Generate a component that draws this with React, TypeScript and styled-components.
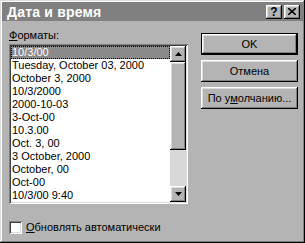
import React from "react"
import styled, { createGlobalStyle, css } from "styled-components"

const FACE = "#b4b4b4"

const GlobalStyle = createGlobalStyle`
  html, body {
    margin: 0;
    padding: 0;
    background: ${FACE};
  }
  body {
    font-family: "Liberation Sans", Arial, sans-serif;
    font-size: 11px;
    color: #000;
  }
`

const raised = css`
  box-shadow: inset -1px -1px #000, inset 1px 1px #fff, inset -2px -2px #808080,
    inset 2px 2px #dcdcdc;
`

const sunken = css`
  box-shadow: inset 1px 1px #808080, inset -1px -1px #fff, inset 2px 2px #404040,
    inset -2px -2px #dcdcdc;
`

const Window = styled.div`
  width: 305px;
  height: 243px;
  box-sizing: border-box;
  padding: 2px;
  background: ${FACE};
  box-shadow: inset -1px -1px #000, inset 1px 1px #dcdcdc, inset -2px -2px #808080,
    inset 2px 2px #fff;
  display: flex;
  flex-direction: column;
`

const TitleBar = styled.div`
  height: 19px;
  background: #808080;
  display: flex;
  align-items: center;
  padding: 0 3px 0 5px;
`

const TitleText = styled.div`
  flex: 1;
  color: #fff;
  font-weight: bold;
  font-size: 14px;
  letter-spacing: 0.2px;
`

const TitleButtons = styled.div`
  display: flex;
  gap: 2px;
`

const TitleButton = styled.div`
  width: 16px;
  height: 14px;
  box-sizing: border-box;
  background: ${FACE};
  ${raised};
  display: flex;
  align-items: center;
  justify-content: center;
  font-weight: bold;
  font-size: 12px;
  line-height: 14px;
`

const Body = styled.div`
  flex: 1;
  display: flex;
  padding: 8px 0 0 7px;
`

const LeftColumn = styled.div`
  width: 179px;
  display: flex;
  flex-direction: column;
`

const Label = styled.div`
  height: 13px;
  line-height: 13px;
  margin-bottom: 2px;
`

const Key = styled.span`
  text-decoration: underline;
`

const ListBox = styled.div`
  height: 160px;
  box-sizing: border-box;
  padding: 2px;
  background: #fff;
  ${sunken};
  display: flex;
`

const Rows = styled.div`
  flex: 1;
  display: flex;
  flex-direction: column;
`

const Row = styled.div<{ $selected?: boolean }>`
  height: 13px;
  line-height: 13px;
  padding-left: 1px;
  white-space: nowrap;
  overflow: hidden;
  ${({ $selected }) =>
    $selected &&
    css`
      background: #8a8a8a;
      color: #fff;
      outline: 1px dotted #000;
      outline-offset: -1px;
    `}
`

const ScrollBar = styled.div`
  width: 16px;
  display: flex;
  flex-direction: column;
  background: #d8d8d8;
`

const ScrollButton = styled.div`
  width: 16px;
  height: 16px;
  box-sizing: border-box;
  background: ${FACE};
  ${raised};
  display: flex;
  align-items: center;
  justify-content: center;
`

const Thumb = styled.div<{ $size: number }>`
  height: ${({ $size }) => $size}px;
  box-sizing: border-box;
  background: ${FACE};
  ${raised};
`

const Track = styled.div`
  flex: 1;
`

const CheckRow = styled.label`
  display: flex;
  align-items: center;
  gap: 4px;
  margin-top: 17px;
  line-height: 13px;
`

const CheckBox = styled.span`
  width: 13px;
  height: 13px;
  box-sizing: border-box;
  background: #fff;
  ${sunken};
`

const RightColumn = styled.div`
  display: flex;
  flex-direction: column;
  gap: 5px;
  margin-left: 13px;
  padding-top: 4px;
`

const Button = styled.div<{ $default?: boolean }>`
  width: 97px;
  height: 22px;
  box-sizing: border-box;
  background: ${FACE};
  ${raised};
  display: flex;
  align-items: center;
  justify-content: center;
  ${({ $default }) =>
    $default &&
    css`
      box-shadow: inset 0 0 0 1px #000, inset -2px -2px #000, inset 2px 2px #fff,
        inset -3px -3px #808080, inset 3px 3px #dcdcdc;
    `}
`

const Arrow = ({ down }: { down?: boolean }) => (
  <svg width="7" height="4" viewBox="0 0 7 4">
    <polygon points={down ? "0,0 7,0 3.5,4" : "0,4 7,4 3.5,0"} fill="#000" />
  </svg>
)

const formats = [
  "10/3/00",
  "Tuesday, October 03, 2000",
  "October 3, 2000",
  "10/3/2000",
  "2000-10-03",
  "3-Oct-00",
  "10.3.00",
  "Oct. 3, 00",
  "3 October, 2000",
  "October, 00",
  "Oct-00",
  "10/3/00 9:40",
]

const App = () => (
  <>
    <GlobalStyle />
    <Window>
      <TitleBar>
        <TitleText>Дата и время</TitleText>
        <TitleButtons>
          <TitleButton>?</TitleButton>
          <TitleButton>
            <svg width="8" height="7" viewBox="0 0 8 7">
              <path d="M0 0 L8 7 M8 0 L0 7" stroke="#000" strokeWidth="1.6" />
            </svg>
          </TitleButton>
        </TitleButtons>
      </TitleBar>
      <Body>
        <LeftColumn>
          <Label>
            <Key>Ф</Key>орматы:
          </Label>
          <ListBox>
            <Rows>
              {formats.map((f, i) => (
                <Row key={f} $selected={i === 0}>
                  {f}
                </Row>
              ))}
            </Rows>
            <ScrollBar>
              <ScrollButton>
                <Arrow />
              </ScrollButton>
              <Thumb $size={88} />
              <Track />
              <ScrollButton>
                <Arrow down />
              </ScrollButton>
            </ScrollBar>
          </ListBox>
          <CheckRow>
            <CheckBox />
            <span>
              <Key>О</Key>бновлять автоматически
            </span>
          </CheckRow>
        </LeftColumn>
        <RightColumn>
          <Button $default>OK</Button>
          <Button>Отмена</Button>
          <Button>
            По у<Key>м</Key>олчанию...
          </Button>
        </RightColumn>
      </Body>
    </Window>
  </>
)

export default App
